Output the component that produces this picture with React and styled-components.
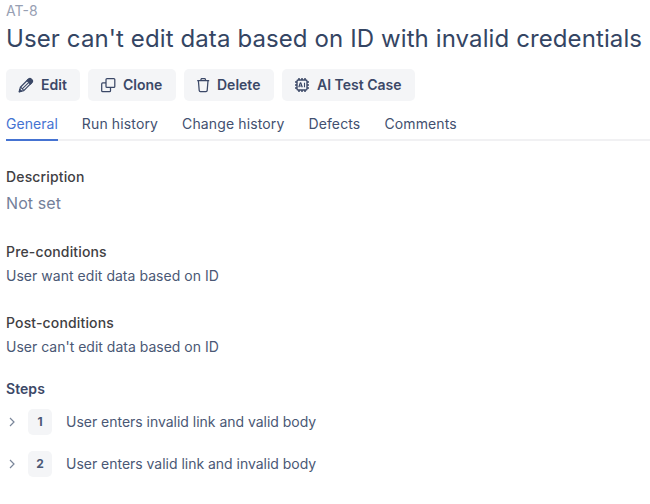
import React from "react";
import styled, { createGlobalStyle } from "styled-components";

const Global = createGlobalStyle`
  * { box-sizing: border-box; }
  body { margin: 0; background: #fff; overflow: hidden; font-family: Inter, sans-serif; color: #3f4e6e; }
  h1, h2, p, ol { margin: 0; padding: 0; }
  button { font: inherit; color: inherit; border: 0; }
`;
const Page = styled.main`
  width: 650px;
  height: 504px;
  padding-left: 6px;
`;
const CaseId = styled.div`
  height: 22px;
  font-size: 14px;
  line-height: 22px;
  color: #97a0b3;
`;
const Title = styled.h1`
  height: 34px;
  font-size: 24px;
  line-height: 34px;
  font-weight: 400;
  letter-spacing: 0.105px;
  white-space: nowrap;
  color: #344563;
`;
const Toolbar = styled.div`
  display: flex;
  gap: 8px;
  margin-top: 13px;
`;
const Button = styled.button`
  display: flex;
  align-items: center;
  width: ${p => p.$width}px;
  height: 32px;
  padding: 0 0 0 12px;
  gap: ${p => p.$gap || 7}px;
  border-radius: 5px;
  background: #f4f5f7;
  color: #3b4867;
  font-size: 14px;
  font-weight: 600;
  white-space: nowrap;
`;
const Label = styled.span`
  padding-bottom: 1px;
`;
const Tabs = styled.nav`
  display: flex;
  gap: 24px;
  height: 40px;
  box-shadow: inset 0 -2px #f1f1f3;
`;
const Tab = styled.a`
  height: 40px;
  padding-top: 13px;
  font-size: 14px;
  line-height: 20px;
  letter-spacing: ${p => (p.$active ? 0.04 : 0.13)}px;
  color: ${p => (p.$active ? "#4573d2" : "#42506f")};
  border-bottom: 2px solid ${p => (p.$active ? "#4573d2" : "transparent")};
`;
const Section = styled.section`
  margin-top: ${p => p.$top}px;
`;
const Heading = styled.h2`
  font-size: 14px;
  line-height: 20px;
  font-weight: ${p => (p.$strong ? 600 : 500)};
  letter-spacing: ${p => (p.$strong ? 0.05 : 0.15)}px;
  color: ${p => (p.$strong ? "#3b4867" : "#3f4043")};
`;
const Text = styled.p`
  padding-top: 2px;
  font-size: 14px;
  line-height: 24px;
  letter-spacing: ${p => p.$tracking || 0}px;
  color: #4a5875;
  white-space: nowrap;
`;
const Empty = styled(Text)`
  padding-top: 4px;
  font-size: 16px;
  letter-spacing: 0.1px;
  color: #74809a;
`;
const Icon = styled.svg`
  flex: none;
  width: 16px;
  height: 16px;
  fill: none;
  stroke: currentColor;
  stroke-width: 1.25;
  stroke-linejoin: round;
`;
const Steps = styled.ol`
  list-style: none;
  margin-top: 10px;
  display: grid;
  gap: 16px;
`;
const Step = styled.li`
  display: flex;
  align-items: center;
  height: 26px;
  font-size: 14px;
  letter-spacing: -0.02px;
  color: #4a5875;
`;
const Chevron = styled.svg`
  width: 12px;
  height: 12px;
  margin-right: 10px;
  fill: none;
  stroke: #7a869a;
  stroke-width: 1.2;
`;
const StepNumber = styled.span`
  display: grid;
  place-items: center;
  width: 24px;
  height: 26px;
  margin-right: 14px;
  padding-bottom: 1px;
  background: #f4f5f7;
  border-radius: 5px;
  color: #4a5875;
  font-size: 12px;
  font-weight: 700;
`;

const Pencil = () => (
  <Icon viewBox="0 0 16 16">
    <path d="M1.4 14.6l1-4.4 8-7.9 3.3 3.3-7.9 8z" />
    <path d="M4.2 11.8l6.7-6.5M2.6 10.2l3.2 3.2" strokeWidth="1.1" />
    <path d="M9 3.6l2-1.9q1-.8 2.1.2l1 1q1 1.1.2 2.1l-1.9 2z" fill="currentColor" />
    <path d="M1.2 14.8l.6-2.3 1.7 1.7z" fill="currentColor" />
  </Icon>
);
const Clone = () => (
  <Icon viewBox="0 0 16 16">
    <rect x="6" y="1.6" width="8.8" height="8.8" rx="1" />
    <path d="M6 5.9H2.7q-1 0-1 1v6.8q0 1 1 1h6.8q1 0 1-1v-3.3" />
  </Icon>
);
const Trash = () => (
  <Icon viewBox="0 0 16 16">
    <path d="M1.2 3.7h12M4.7 3.5l.6-1.9h3.8l.6 1.9M2.4 3.8l.8 9.6q.1 1.2 1.2 1.2h5.6q1.1 0 1.2-1.2l.8-9.6" />
  </Icon>
);
const Chip = () => (
  <Icon viewBox="0 0 16 16">
    <rect x="3" y="3" width="10" height="10" rx="1.2" strokeWidth="1.4" />
    <path d="M5 3V1M8 3V1M11 3V1M5 13v2M8 13v2M11 13v2M3 5H1M3 8H1M3 11H1M13 5h2M13 8h2M13 11h2" strokeWidth="1.5" />
    <path d="M4.8 10.2l1.5-4.4h.5l1.5 4.4M5.4 9h2.4M10.5 5.7v4.6" strokeWidth="1.1" />
  </Icon>
);

const steps = ["User enters invalid link and valid body", "User enters valid link and invalid body"];

export default function App() {
  return (
    <>
      <Global />
      <Page>
        <CaseId>AT-8</CaseId>
        <Title>User can't edit data based on ID with invalid credentials</Title>
        <Toolbar>
          <Button $width={74}><Pencil /><Label>Edit</Label></Button>
          <Button $width={88}><Clone /><Label>Clone</Label></Button>
          <Button $width={90} $gap={5}><Trash /><Label>Delete</Label></Button>
          <Button $width={133}><Chip /><Label>AI Test Case</Label></Button>
        </Toolbar>
        <Tabs>
          <Tab $active>General</Tab>
          <Tab>Run history</Tab>
          <Tab>Change history</Tab>
          <Tab>Defects</Tab>
          <Tab>Comments</Tab>
        </Tabs>
        <Section $top={26}>
          <Heading>Description</Heading>
          <Empty>Not set</Empty>
        </Section>
        <Section $top={27}>
          <Heading>Pre-conditions</Heading>
          <Text $tracking={0.03}>User want edit data based on ID</Text>
        </Section>
        <Section $top={25}>
          <Heading>Post-conditions</Heading>
          <Text>User can't edit data based on ID</Text>
        </Section>
        <Section $top={20}>
          <Heading $strong>Steps</Heading>
          <Steps>
            {steps.map((step) => (
              <Step key={step}>
                <Chevron viewBox="0 0 12 12"><path d="M4 2l4 4-4 4" /></Chevron>
                <StepNumber>{steps.indexOf(step) + 1}</StepNumber>
                <Label>{step}</Label>
              </Step>
            ))}
          </Steps>
        </Section>
      </Page>
    </>
  );
}
